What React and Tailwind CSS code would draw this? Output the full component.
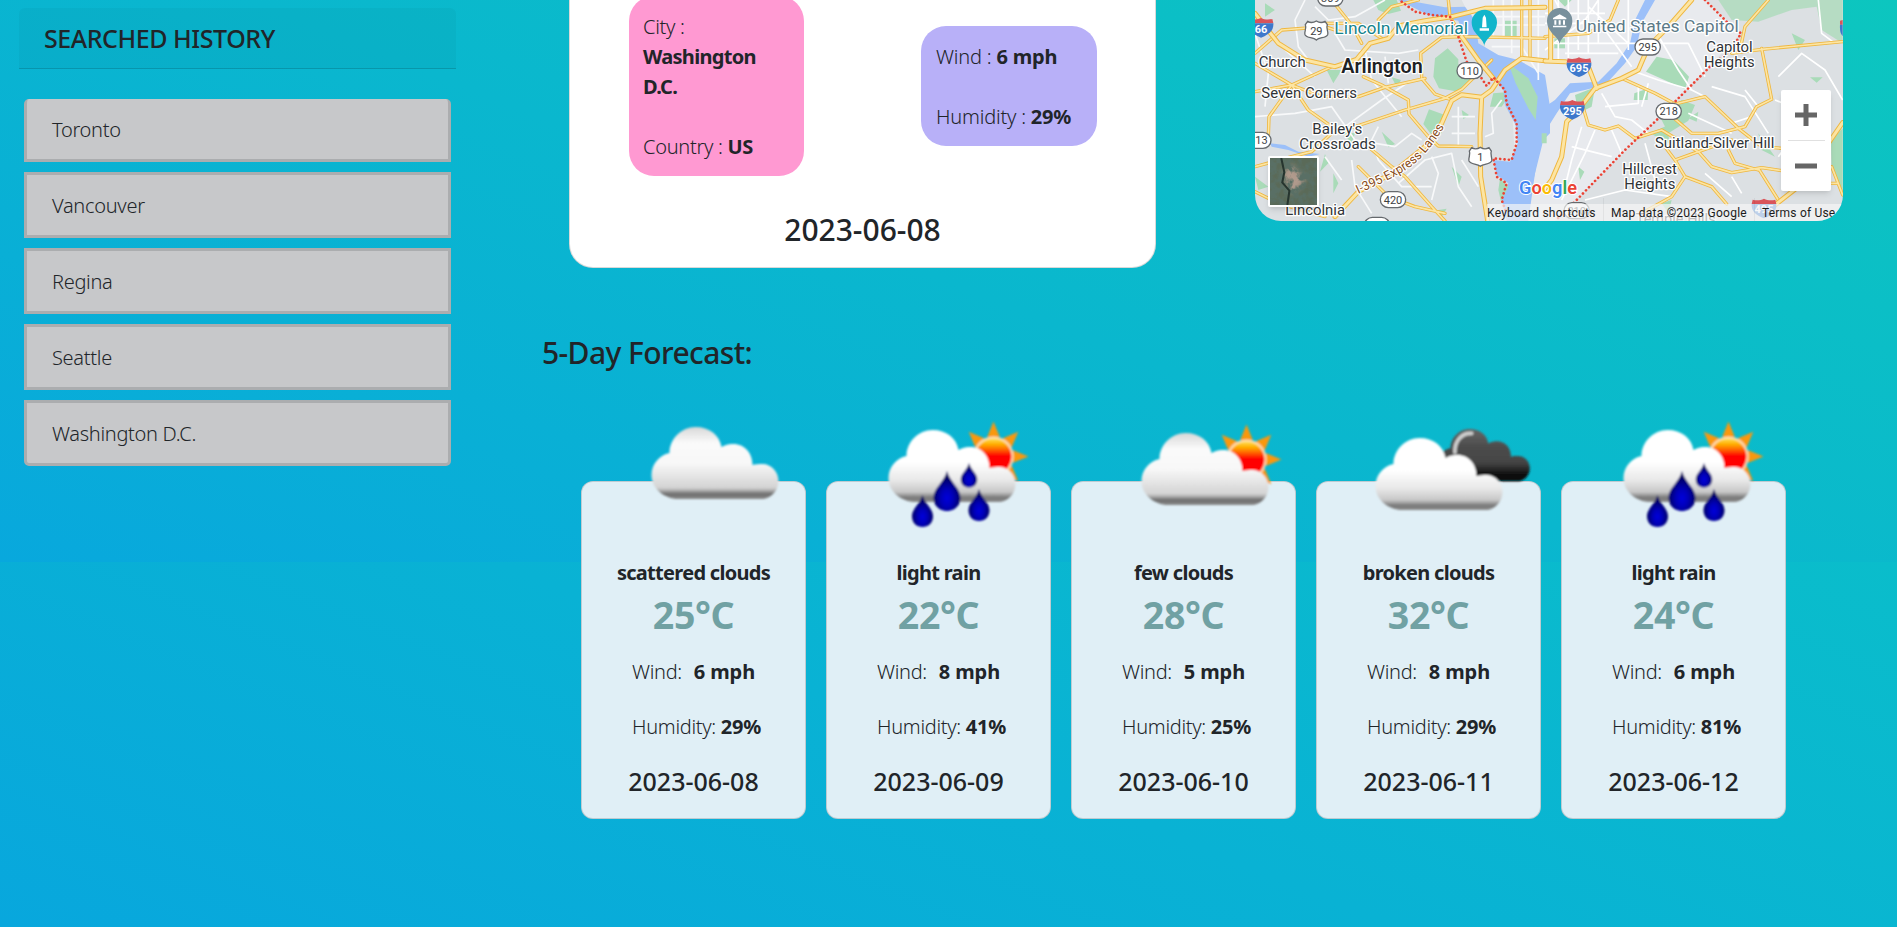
import React from "react";

const CLOUD =
  "M24 72 C10 70 0 60 0 48 C0 37 8 28 18 26 C18 12 30 0 44 0 C58 0 68 8 70 20 C74 17.5 79 17 82 17 C93 17 101 26 101 38 C104 37 108 37 111 37 C120 37 127 45 127 54 C127 63 120 71 112 72 Z";

const HISTORY = ["Toronto", "Vancouver", "Regina", "Seattle", "Washington D.C."];

const FORECAST = [
  { icon: "scattered", text: "scattered clouds", temp: 25, wind: 6, humidity: 29, date: "2023-06-08" },
  { icon: "rain", text: "light rain", temp: 22, wind: 8, humidity: 41, date: "2023-06-09" },
  { icon: "few", text: "few clouds", temp: 28, wind: 5, humidity: 25, date: "2023-06-10" },
  { icon: "broken", text: "broken clouds", temp: 32, wind: 8, humidity: 29, date: "2023-06-11" },
  { icon: "rain", text: "light rain", temp: 24, wind: 6, humidity: 81, date: "2023-06-12" },
];

const ICON_ORIGIN = {
  scattered: [69.5, -55],
  rain: [61.5, -52],
  few: [69.5, -49],
  broken: [58.5, -44],
};

function IconDefs() {
  return (
    <svg className="absolute size-0" aria-hidden="true">
      <defs>
        <linearGradient id="cloud-grey" x1="0" y1="0" x2="0" y2="1">
          <stop offset="0" stopColor="#d8d8d8" />
          <stop offset=".22" stopColor="#fafafa" />
          <stop offset=".5" stopColor="#f8f8f8" />
          <stop offset=".84" stopColor="#d4d4d4" />
          <stop offset=".88" stopColor="#b0b0b0" />
          <stop offset=".93" stopColor="#6c6c6c" />
          <stop offset="1" stopColor="#8a8a8a" />
        </linearGradient>
        <linearGradient id="cloud-white" x1="0" y1="0" x2="0" y2="1">
          <stop offset="0" stopColor="#fff" />
          <stop offset=".45" stopColor="#fff" />
          <stop offset=".7" stopColor="#e8e8e8" />
          <stop offset=".86" stopColor="#c8c8c8" />
          <stop offset=".94" stopColor="#777" />
          <stop offset="1" stopColor="#8c8c8c" />
        </linearGradient>
        <linearGradient id="cloud-dark" x1="0" y1="0" x2="0" y2="1">
          <stop offset="0" stopColor="#666" />
          <stop offset=".35" stopColor="#4c4c4c" />
          <stop offset=".65" stopColor="#444" />
          <stop offset=".88" stopColor="#0c0c0c" />
          <stop offset="1" stopColor="#111" />
        </linearGradient>
        <linearGradient id="sun" x1="0" y1="0" x2="0" y2="1">
          <stop offset="0" stopColor="#ffe050" />
          <stop offset=".16" stopColor="#ffae00" />
          <stop offset=".36" stopColor="#ff4a00" />
          <stop offset=".48" stopColor="#f00" />
          <stop offset="1" stopColor="#f00" />
        </linearGradient>
        <radialGradient id="drop" cx=".5" cy=".68" r=".5">
          <stop offset="0" stopColor="#0000dc" />
          <stop offset=".45" stopColor="#0000b8" />
          <stop offset="1" stopColor="#000064" />
        </radialGradient>
        <filter id="soft" x="-10%" y="-10%" width="120%" height="120%">
          <feGaussianBlur stdDeviation="1" />
        </filter>
      </defs>
    </svg>
  );
}

function Sun() {
  return (
    <g transform="translate(105 26.5)">
      {[0, 45, 90, 135, 315].map((a) => (
        <path key={a} d="M0 -35 L6.5 -19 H-6.5 Z" fill="#f9980f" transform={`rotate(${a})`} />
      ))}
      <circle r="20" fill="#ffe0b8" />
      <circle r="18" fill="url(#sun)" />
    </g>
  );
}

function Drop({ x, y, w, h }) {
  const r = w / 2;
  return (
    <path
      transform={`translate(${x} ${y})`}
      d={`M0 0 C${r * 0.25} ${h * 0.3} ${r} ${h * 0.42} ${r} ${h * 0.67} C${r} ${h * 0.87} ${r * 0.55} ${h} 0 ${h} C${-r * 0.55} ${h} ${-r} ${h * 0.87} ${-r} ${h * 0.67} C${-r} ${h * 0.42} ${-r * 0.25} ${h * 0.3} 0 0 Z`}
      fill="url(#drop)"
    />
  );
}

function WeatherIcon({ kind }) {
  const [x, y] = ICON_ORIGIN[kind];
  return (
    <svg viewBox="0 -70 223 134" className="-mt-[70px] h-[134px] w-[223px] shrink-0 overflow-visible">
      <g transform={`translate(${x} ${y})`} filter="url(#soft)">
        {(kind === "rain" || kind === "few") && <Sun />}
        {kind === "broken" && (
          <g transform="translate(62 -9) scale(.727)">
            <path d={CLOUD} fill="url(#cloud-dark)" />
            <path d="M24 32 C23 16 34 5 47 6" fill="none" stroke="#cfcfcf" strokeWidth="5" strokeLinecap="round" />
          </g>
        )}
        <path d={CLOUD} fill={kind === "rain" || kind === "broken" ? "url(#cloud-white)" : "url(#cloud-grey)"} />
        {kind === "rain" && (
          <>
            <Drop x={80.5} y={33} w={16.5} h={24.5} />
            <Drop x={58.5} y={41} w={27} h={40} />
            <Drop x={34} y={65} w={21} h={32} />
            <Drop x={90.5} y={59} w={21} h={32} />
          </>
        )}
      </g>
    </svg>
  );
}

function Label({ x, y, w, size = 46, weight = 400, fill = "#2f3337", children }) {
  return (
    <text
      x={x}
      y={y}
      textLength={w}
      lengthAdjust="spacingAndGlyphs"
      fontSize={size}
      fontWeight={weight}
      fill={fill}
      stroke="#fff"
      strokeWidth="8"
      strokeLinejoin="round"
      paintOrder="stroke"
    >
      {children}
    </text>
  );
}

function Oval({ x, y, n }) {
  return (
    <g transform={`translate(${x} ${y})`}>
      <rect x="-38" y="-24" width="76" height="48" rx="24" fill="#fff" stroke="#666a6e" strokeWidth="4" />
      <text y="12" textAnchor="middle" fontSize="33" fill="#3c4043">{n}</text>
    </g>
  );
}

function UsShield({ x, y, n }) {
  return (
    <g transform={`translate(${x} ${y})`}>
      <path
        d="M-26 -27 C-18 -22 -8 -23 0 -28 C8 -23 18 -22 26 -27 L33 -17 C28 -5 37 2 34 13 C29 24 10 20 0 29 C-10 20 -29 24 -34 13 C-37 2 -28 -5 -33 -17 Z"
        fill="#fff"
        stroke="#666a6e"
        strokeWidth="4"
      />
      <text y="13" textAnchor="middle" fontSize="33" fill="#3c4043">{n}</text>
    </g>
  );
}

function Interstate({ x, y, n }) {
  return (
    <g transform={`translate(${x} ${y})`}>
      <path d="M-34 -27 C-22 -24 -10 -25 0 -30 C10 -25 22 -24 34 -27 L37 -14 H-37 Z" fill="#d9545a" />
      <path d="M-37 -14 H37 C39 8 22 21 0 29 C-22 21 -39 8 -37 -14 Z" fill="#3d78cc" />
      <text y="14" textAnchor="middle" fontSize="33" fontWeight="700" fill="#fff">{n}</text>
    </g>
  );
}

const WEST_MAIN =
  "M30 40 L100 130 L180 180 L270 200 L335 178 L375 130 L430 115 L460 78 L540 62 L620 50 M650 110 L700 180 L745 235 M270 650 L340 575 L440 520 L540 440 L590 370 L620 302 L650 284 L710 292 L740 270 L780 210 L830 175 L900 182 M710 292 L705 400 L707 530 L728 663 M620 50 L720 25 L900 22";
const WEST_ROADS =
  "M30 190 L140 255 L230 290 L340 290 L420 262 L540 235 M30 275 L140 255 L260 200 M140 255 L190 330 L260 380 L300 395 M345 375 L480 330 L600 295 L650 268 L740 180 M355 230 L410 255 L490 300 L492 342 L550 410 L580 438 L680 440 M530 230 L527 160 L590 112 L650 110 L900 115 M530 235 L570 282 L620 300 M370 440 L440 500 L480 530 L560 620 L600 663 M340 500 L430 590 L510 620 L600 640 M260 0 L320 75 L350 130 M610 0 L615 50 L650 110 M830 0 L830 175 M855 0 V175 M30 500 L140 470 L200 455 L260 400 L345 375 M70 410 L72 350 L140 255 M30 575 L100 610 L240 650 M30 160 L110 90 L240 80 L300 100 M400 60 L440 20 L520 0 M240 70 H340 L410 115";
const WEST_MINOR =
  "M30 350 L150 340 L260 320 L330 420 L450 440 M180 0 L150 60 L160 140 L190 180 M210 20 L250 60 L330 50 L420 0 M270 100 L300 150 L460 160 L520 150 M360 150 L380 240 L470 350 M300 380 L410 300 L500 240 M420 170 L430 250 M120 150 L210 230 M30 100 L70 220 L60 320 M400 380 L380 420 L400 480 L470 560 L560 560 M450 440 L500 400 L530 420 M460 550 L540 480 L620 460 L640 560 L680 620 M320 480 L330 560 L380 640 M240 470 L290 540 M560 470 L580 520 L560 600 M620 350 L690 350 M620 400 L690 400 M640 320 L640 440 M720 410 L745 400 L740 340 L770 300 M745 0 V110 M775 0 V110 M800 0 V160 M880 0 V240 M730 50 H900 M730 75 H900 M740 140 H830 L880 220 M650 480 L700 560 M200 560 L180 640";
const EAST_MAIN =
  "M440 0 L370 80 L310 140 L280 210 L230 235 L150 265 L100 330 L65 365 L50 470 L20 540 L0 565 M0 183 L60 185 L130 200 L155 265 M690 615 L760 560 L893 368 M17 0 V183";
const EAST_ROADS =
  "M230 235 L330 280 L390 312 L480 290 L580 385 L650 440 L710 445 M115 325 L130 375 L180 390 L220 378 L270 415 L350 390 L400 420 L460 455 L500 500 L560 518 L650 503 L710 512 M370 340 L440 400 L520 400 L600 380 L635 320 L680 298 L650 145 M560 160 L650 148 L893 125 M670 0 L600 80 L585 150 M0 110 L130 100 L195 60 L220 0 M360 440 L390 480 L420 530 L500 560 L545 612 M390 480 L460 455 L560 420 M420 530 L380 590 L290 640 M640 505 L700 600 M550 450 L570 490 L640 510 M860 500 L893 585 M840 550 H880";
const EAST_MINOR =
  "M40 0 V180 M70 0 V190 M100 0 V150 M130 0 V160 M160 0 V130 M0 40 H180 M0 70 H200 M30 130 H240 M60 160 H220 M130 20 L250 130 M0 150 L120 60 L160 0 M200 130 L270 130 L430 130 L480 230 M250 0 V150 M180 90 L260 200 M330 90 L400 210 L440 270 M270 215 L340 240 L440 270 L480 290 M170 280 L210 350 L260 360 L310 400 M280 260 V310 L180 320 M310 250 L290 320 M110 380 L80 480 L60 560 M150 390 L120 460 L50 600 M80 440 L200 470 M200 390 L230 460 M30 0 L60 60 M500 260 L600 290 L670 400 M600 270 L640 320 M560 370 L620 350 M700 230 L770 160 L840 210 L893 300 M820 0 L830 100 L870 130 M480 520 L560 590 M560 530 L590 580 M300 430 L330 540 M430 340 L560 400 M120 600 L240 570 L380 590 M730 430 L700 470 M690 300 L740 320";

function CasedRoad({ d, outer, inner }) {
  return (
    <g fill="none" strokeLinejoin="round" strokeLinecap="round">
      <path d={d} stroke="#efb73f" strokeWidth={outer} />
      <path d={d} stroke="#fce5a4" strokeWidth={inner} />
    </g>
  );
}

function MapDrawing() {
  const dotted = { fill: "none", stroke: "#ea4335", strokeWidth: 8, strokeDasharray: "0.1 13", strokeLinecap: "round" };
  return (
    <svg viewBox="0 0 588 221" className="block h-[221px] w-[588px] font-[Roboto,sans-serif]">
      <rect width="588" height="221" fill="#dce0e3" />
      <g transform="translate(290 0) scale(.33333)">
        <path d="M-340 0 H480 L588 100 L390 305 L90 605 L30 663 H-80 L-100 300 L-250 0 Z" fill="#e8eaee" />
        <g fill="#a9dbb8">
          <path d="M520 0 H893 V130 L830 90 L815 20 L740 30 L640 65 L560 60 Z" opacity=".75" />
          <path d="M303 215 L335 170 L385 180 L432 230 L420 268 Z" />
          <path d="M370 400 L345 350 L410 300 L450 315 L430 362 Z" />
          <path d="M315 400 L370 375 L372 430 Z" />
          <path d="M858 420 L893 385 V580 L860 510 Z" />
          <path d="M28 115 H60 V145 H28 Z" />
          <path d="M795 232 H833 L815 248 Z" />
          <path d="M90 285 L150 262 L140 320 L100 340 Z" />
          <path d="M268 280 L310 265 L308 300 H266 Z" />
          <path d="M430 355 L460 335 L455 365 Z M640 400 L690 470 L650 450 Z M100 500 L118 515 L105 540 Z M350 610 L380 600 L370 640 Z M40 0 H80 L60 20 Z M740 100 L780 120 L760 150 Z" />
        </g>
        <path d="M-60 663 L-40 560 L-10 440 L0 395 L35 340 L75 280 L120 270 L180 255 L240 190 L275 140 L290 70 L330 0 H300 L270 60 L255 130 L215 190 L160 245 L75 250 L30 300 L0 320 L-20 340 Z" fill="#9cc0f9" />
        <path d={EAST_MINOR} fill="none" stroke="#fff" strokeWidth="5" strokeLinejoin="round" />
      </g>
      <g transform="translate(-10 0) scale(.33333)">
        <g fill="#a9dbb8">
          <path d="M570 175 L608 145 L640 178 L640 212 L682 242 L640 275 L582 265 L565 230 Z" />
          <path d="M552 328 L600 345 L590 400 L565 412 L535 372 Z" />
          <path d="M385 0 H455 L468 32 L430 42 L400 30 Z" />
          <path d="M245 210 H290 L265 250 Z M410 395 L450 432 L430 442 Z M735 320 L745 280 L800 275 L770 320 Z M30 530 L70 560 L40 570 Z M240 462 L250 490 L225 515 Z M440 232 L468 240 L455 262 Z M265 520 L280 550 L265 580 Z M650 330 L672 345 L655 358 Z M620 500 L650 530 L640 560 Z M60 10 L90 30 L60 50 Z M580 630 L605 626 L590 650 Z M290 395 L330 400 L320 430 Z" />
        </g>
        <path d="M480 0 L600 22 L660 20 L690 60 L700 130 L760 165 L820 180 L900 225 L915 320 L915 400 L885 430 L870 520 L850 663 H785 L770 600 L790 550 L755 525 L745 480 L795 485 L818 430 L812 375 L780 315 L775 270 L735 225 L690 160 L655 110 L640 62 L550 45 L460 0 Z" fill="#9cc0f9" />
        <path d="M75 430 L120 435 L160 455 L225 462 L190 470 L130 450 L80 440 Z" fill="#9cc0f9" />
        <path d="M790 190 L850 235 L878 290 L872 360 L850 325 L812 250 Z" fill="#a9dbb8" />
        <path d="M765 535 L790 560 L768 605 L760 570 Z M780 62 H815 V110 H780 Z M890 400 L905 400 V430 H890 Z" fill="#a9dbb8" />
        <path d={WEST_MINOR} fill="none" stroke="#f8f9fa" strokeWidth="5" strokeLinejoin="round" />
        <CasedRoad d={WEST_ROADS} outer={10} inner={5} />
        <CasedRoad d={WEST_MAIN} outer={15} inner={9} />
        <path d="M470 5 L510 35 L560 45 L615 50 L640 110 L665 185 L710 235 L725 258 L745 232 L780 270 L785 310 L815 370 L815 430 L800 480 L745 475 L755 530 L785 550 L770 600 L785 640" {...dotted} />
      </g>
      <g transform="translate(290 0) scale(.33333)">
        <CasedRoad d={EAST_ROADS} outer={10} inner={5} />
        <CasedRoad d={EAST_MAIN} outer={15} inner={9} />
        <path d="M480 0 L545 65 L588 100 L560 150 L500 195 L390 305 L330 365 L240 450 L90 605 L30 663" {...dotted} />
        <Oval x={308} y={141} n="295" />
        <Oval x={371} y={334} n="218" />
        <Oval x={95} y={632} n="210" />
        <Interstate x={102} y={202} n="695" />
        <Interstate x={82} y={330} n="295" />
        <Interstate x={657} y={626} n="495" />
        <path d="M893 60 L885 62 V74 H893 Z" fill="#d9545a" />
        <path d="M893 74 H885 C884 92 887 102 893 108 Z" fill="#3d78cc" />
        <path d="M44 132 C40 108 6 98 6 62 A38 38 0 0 1 82 62 C82 98 48 108 44 132 Z" fill="#78909c" />
        <path d="M24 54 L44 43 L64 54 V58 H24 Z M28 61 H34 V74 H28 Z M41 61 H47 V74 H41 Z M54 61 H60 V74 H54 Z M24 77 H64 V82 H24 Z" fill="#fff" />
        <Label x={92} y={96} w={489} size={52} fill="#5c7a88">United States Capitol</Label>
        <Label x={484} y={155} w={139}>Capitol</Label>
        <Label x={477} y={201} w={152}>Heights</Label>
        <Label x={330} y={443} w={358}>Suitland-Silver Hill</Label>
        <Label x={232} y={522} w={164}>Hillcrest</Label>
        <Label x={238} y={567} w={153}>Heights</Label>
        <Label x={272} y={672} w={240}>Temple Hills</Label>
      </g>
      <g transform="translate(-10 0) scale(.33333)">
        <Oval x={256} y={-6} n="309" />
        <Oval x={674} y={212} n="110" />
        <Oval x={444} y={599} n="420" />
        <Oval x={40} y={421} n="613" />
        <rect x="358" y="652" width="76" height="48" rx="24" fill="#fff" stroke="#666a6e" strokeWidth="4" />
        <UsShield x={214} y={91} n="29" />
        <UsShield x={706} y={470} n="1" />
        <Interstate x={48} y={84} n="66" />
        <path d="M718 138 C714 112 680 102 680 67 A38 38 0 0 1 756 67 C756 102 722 112 718 138 Z" fill="#12b5cb" />
        <path d="M718 44 L723 53 L725 82 H711 L713 53 Z M704 85 H732 V92 H704 Z" fill="#fff" />
        <Label x={268} y={103} w={401} size={52} fill="#14838d">Lincoln Memorial</Label>
        <Label x={41} y={200} w={141}>Church</Label>
        <Label x={289} y={218} w={244} size={58} weight={600} fill="#202124">Arlington</Label>
        <Label x={49} y={294} w={287}>Seven Corners</Label>
        <Label x={202} y={401} w={150}>Bailey's</Label>
        <Label x={163} y={446} w={229}>Crossroads</Label>
        <Label x={121} y={645} w={179}>Lincolnia</Label>
        <path id="express-lanes" d="M340 582 C430 540 500 510 540 460 C570 425 590 400 612 350" fill="none" />
        <text fontSize="38" fill="#8a4d1a" stroke="#fff" strokeWidth="7" paintOrder="stroke" strokeLinejoin="round">
          <textPath href="#express-lanes" textLength="335" lengthAdjust="spacingAndGlyphs">I-395 Express Lanes</textPath>
        </text>
      </g>
      <text x="264" y="194" fontSize="19" fontWeight="600" textLength="58" lengthAdjust="spacingAndGlyphs" stroke="#fff" strokeWidth="2" paintOrder="stroke">
        <tspan fill="#4285f4">G</tspan><tspan fill="#ea4335">o</tspan><tspan fill="#fbbc04">o</tspan><tspan fill="#4285f4">g</tspan><tspan fill="#34a853">l</tspan><tspan fill="#ea4335">e</tspan>
      </text>
    </svg>
  );
}

function SatelliteThumb() {
  return (
    <svg viewBox="0 0 46 46" className="block size-full">
      <defs>
        <filter id="terrain" x="0" y="0" width="100%" height="100%">
          <feTurbulence type="fractalNoise" baseFrequency="0.14" numOctaves="4" seed="8" />
          <feColorMatrix values="0 0 0 0 .1  0 0 0 0 .16  0 0 0 0 .13  0 4 0 0 -1.5" />
        </filter>
        <filter id="town">
          <feGaussianBlur stdDeviation="2.5" />
        </filter>
      </defs>
      <rect width="46" height="46" fill="#5a6a58" />
      <path d="M12 14 L22 6 L28 14 L36 18 L30 28 L22 36 L16 26 Z" fill="#b09a8c" filter="url(#town)" />
      <rect width="46" height="46" filter="url(#terrain)" />
      <path d="M11 0 L14 14 L12 24 L19 32 L17 46" stroke="#26352f" strokeWidth="2" fill="none" />
    </svg>
  );
}

function MapCard() {
  return (
    <section className="relative h-[221px] w-[588px] overflow-hidden rounded-b-[26px]">
      <MapDrawing />
      <div className="absolute top-[156px] left-[13px] size-[51px] overflow-hidden rounded-xs border-2 border-white shadow-md">
        <SatelliteThumb />
      </div>
      <div className="absolute right-0 bottom-0 flex h-[17px] w-[356px] items-center bg-[#f5f5f5]/70 font-[Roboto,sans-serif] text-[12px] whitespace-nowrap text-[#1c1c1c]">
        <span className="w-[116px] tracking-[0.25px]">Keyboard shortcuts</span>
        <span className="w-[151px] border-l border-black/5 pl-[7px] tracking-[0.25px]">Map data ©2023 Google</span>
        <span className="border-l border-black/5 pl-[7px] tracking-[0.2px]">Terms of Use</span>
      </div>
      <div className="absolute top-[90px] left-[526px] flex h-[101px] w-[50px] flex-col items-center rounded-xs bg-white shadow-md">
        <button aria-label="Zoom in" className="flex h-[50px] w-full items-center justify-center">
          <svg viewBox="0 0 22 22" className="size-[22px]">
            <path d="M8.5 0 H13.5 V8.5 H22 V13.5 H13.5 V22 H8.5 V13.5 H0 V8.5 H8.5 Z" fill="#666" />
          </svg>
        </button>
        <div className="h-px w-[37px] bg-[#e0e0e0]" />
        <button aria-label="Zoom out" className="flex h-[50px] w-full items-center justify-center">
          <svg viewBox="0 0 22 22" className="size-[22px]">
            <path d="M0 8.5 H22 V13.5 H0 Z" fill="#666" />
          </svg>
        </button>
      </div>
    </section>
  );
}

function Sidebar() {
  return (
    <aside className="w-[437px] pt-2">
      <h2 className="h-[61px] rounded-t-md border-b border-black/15 bg-black/[0.03] pl-[25px] text-[25px] leading-[61px] font-medium tracking-[-0.45px]">
        SEARCHED HISTORY
      </h2>
      <ul className="mt-[30px] flex flex-col gap-[10px] px-[5px]">
        {HISTORY.map((city) => (
          <li
            key={city}
            className="border-[3px] border-[#abadaf] bg-[#c7c8ca] pt-4 pb-[14px] pl-[25px] font-[350] tracking-[-0.3px] first:rounded-t-[5px] first:border-t-0 last:rounded-b-[5px]"
          >
            {city}
          </li>
        ))}
      </ul>
    </aside>
  );
}

function CurrentWeather() {
  return (
    <section className="flex h-[268px] w-[587px] flex-col rounded-b-[24px] border border-t-0 border-black/15 bg-white">
      <div className="flex h-[176px] items-start gap-[117px] pl-[59px]">
        <div className="-mt-1 h-[180px] w-[175px] rounded-[25px] bg-[#ff99d2] px-[14px] py-4 font-[350] tracking-[-0.3px]">
          <p>
            City :<br />
            <b className="font-bold tracking-[-0.7px]">Washington D.C.</b>
          </p>
          <p className="mt-[30px]">
            Country : <b className="font-bold">US</b>
          </p>
        </div>
        <div className="mt-[26px] h-[120px] w-[176px] rounded-[25px] bg-[#b8b0f8] px-[15px] py-4 font-[350] tracking-[-0.2px]">
          <p>
            Wind : <b className="font-bold">6 mph</b>
          </p>
          <p className="mt-[30px]">
            Humidity : <b className="font-bold">29%</b>
          </p>
        </div>
      </div>
      <p className="mt-[36px] text-center text-[30px] leading-[36px] font-medium">2023-06-08</p>
    </section>
  );
}

function DayCard({ day }) {
  return (
    <article className="flex h-[338px] w-[225px] flex-col items-center rounded-xl border border-black/15 bg-[#e0eff6]">
      <WeatherIcon kind={day.icon} />
      <p className="mt-3 font-bold tracking-[-0.7px]">{day.text}</p>
      <p className="mt-[3px] text-[37.5px] leading-[48px] font-bold tracking-[-0.4px] text-[#70a1a3]">{day.temp}°C</p>
      <div className="mt-[18px] w-full pl-[50px] font-[350] tracking-[-0.3px] whitespace-pre">
        <p>
          Wind:{"  "}
          <b className="ml-[2px] font-bold tracking-[-0.1px]">{day.wind} mph</b>
        </p>
        <p className="mt-[25px]">
          Humidity: <b className="font-bold">{day.humidity}%</b>
        </p>
      </div>
      <p className="mt-[24px] text-[25px] leading-[30px] font-medium">{day.date}</p>
    </article>
  );
}

export default function App() {
  return (
    <div className="flex h-[927px] w-[1897px] overflow-hidden bg-[linear-gradient(22deg,#08a8dd,#0cc6bf),linear-gradient(22deg,#08a7dd,#0abdcb)] bg-[length:100%_562px,100%_365px] bg-[position:0_0,0_562px] bg-no-repeat pl-[19px] font-['Noto_Sans','Open_Sans',sans-serif] text-[20px] leading-[30px] text-[#212529]">
      <IconDefs />
      <Sidebar />
      <main className="flex-1 pl-[85px]">
        <div className="flex h-[268px] gap-[99px] pl-7">
          <CurrentWeather />
          <MapCard />
        </div>
        <h1 className="mt-[67px] pl-px text-[30px] leading-[36px] font-medium tracking-[-0.6px]">5-Day Forecast:</h1>
        <div className="mt-[110px] flex gap-5 pl-10">
          {FORECAST.map((day) => (
            <DayCard key={day.date} day={day} />
          ))}
        </div>
      </main>
    </div>
  );
}
